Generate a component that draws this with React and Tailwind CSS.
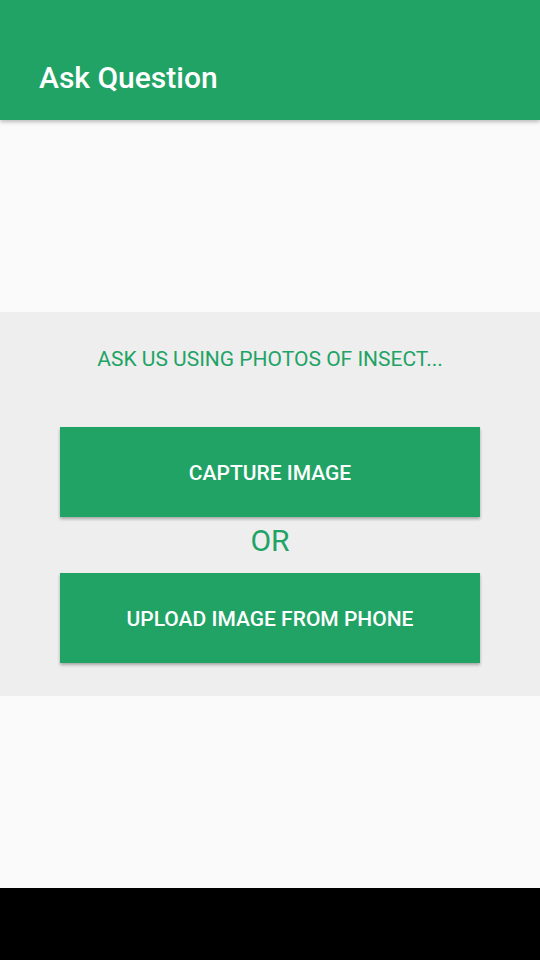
export default function App() {
  return (
    <div className="flex h-[960px] w-[540px] flex-col bg-black font-['Roboto',sans-serif]">
      <header className="relative z-10 flex h-[120px] shrink-0 items-center bg-[#21a366] px-[39px] pt-[36px] shadow-[0_2px_4px_rgba(0,0,0,0.25)]">
        <h1 className="text-[30px] font-medium leading-none text-white">Ask Question</h1>
      </header>

      <main className="flex h-[768px] shrink-0 flex-col bg-[#fafafa]">
        <div className="h-[192px] shrink-0" />
        <section className="flex h-[384px] shrink-0 flex-col items-center bg-[#eeeeee] px-[60px] pt-[35px]">
          <p className="h-[24px] text-[21px] leading-[24px] text-[#21a366]">ASK US USING PHOTOS OF INSECT...</p>
          <button className="mt-[56px] flex h-[90px] w-full items-center justify-center bg-[#21a366] pt-[4px] text-[21px] font-medium text-white shadow-[0_2px_3px_rgba(0,0,0,0.3)]">
            CAPTURE IMAGE
          </button>
          <div className="flex h-[56px] items-center justify-center pb-[8px] text-[30px] leading-none text-[#21a366]">OR</div>
          <button className="flex h-[90px] w-full items-center justify-center bg-[#21a366] pt-[4px] text-[21px] font-medium text-white shadow-[0_2px_3px_rgba(0,0,0,0.3)]">
            UPLOAD IMAGE FROM PHONE
          </button>
        </section>
      </main>

      <div className="h-[72px] shrink-0 bg-black" />
    </div>
  );
}
